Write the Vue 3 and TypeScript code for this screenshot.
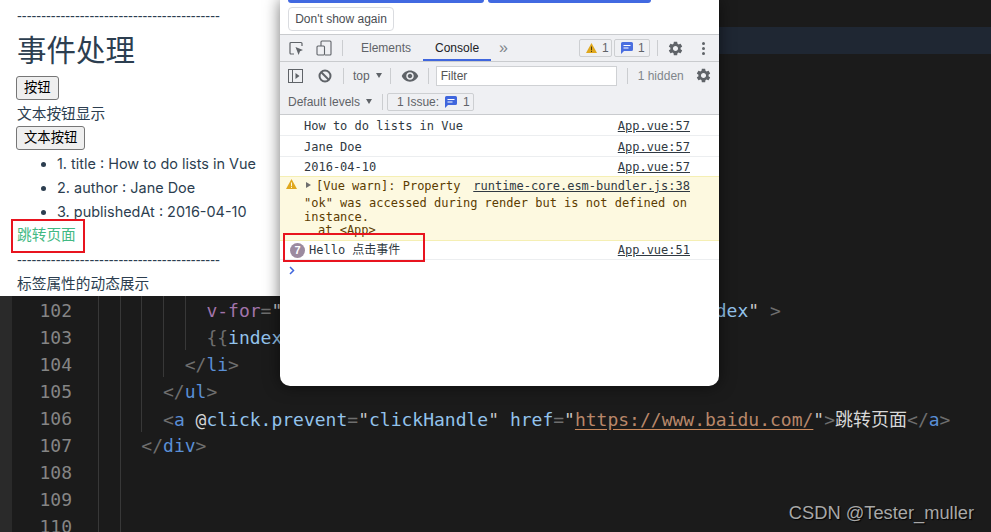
<script setup lang="ts">
type Tok = { t: string; c: string }
type Line = { n: number; indent: number; toks: Tok[]; active?: boolean }

const gear = 'M19.14 12.94c.04-.3.06-.61.06-.94 0-.32-.02-.64-.07-.94l2.03-1.58c.18-.14.23-.41.12-.61l-1.92-3.32c-.12-.22-.37-.29-.59-.22l-2.39.96c-.5-.38-1.03-.7-1.62-.94l-.36-2.54c-.04-.24-.24-.41-.48-.41h-3.84c-.24 0-.43.17-.47.41l-.36 2.54c-.59.24-1.13.57-1.62.94l-2.39-.96c-.22-.08-.47 0-.59.22L2.74 8.87c-.12.21-.08.47.12.61l2.03 1.58c-.05.3-.09.63-.09.94s.02.64.07.94l-2.03 1.58c-.18.14-.23.41-.12.61l1.92 3.32c.12.22.37.29.59.22l2.39-.96c.5.38 1.03.7 1.62.94l.36 2.54c.05.24.24.41.48.41h3.84c.24 0 .44-.17.47-.41l.36-2.54c.59-.24 1.13-.56 1.62-.94l2.39.96c.22.08.47 0 .59-.22l1.92-3.32c.12-.22.07-.47-.12-.61l-2.01-1.58zM12 15.6c-1.98 0-3.6-1.62-3.6-3.6s1.62-3.6 3.6-3.6 3.6 1.62 3.6 3.6-1.62 3.6-3.6 3.6z'

const filled: Record<number, { indent: number; toks: Tok[] }> = {
  102: {
    indent: 5,
    toks: [
      { t: 'v-for', c: 'k' },
      { t: '=', c: 'p' },
      { t: '"', c: 'q' },
      { t: '(value, key, index) in objects', c: 'a' },
      { t: '"', c: 'q' },
      { t: ' ', c: 'p' },
      { t: ':key', c: 'a' },
      { t: '=', c: 'p' },
      { t: '"', c: 'q' },
      { t: 'index', c: 'a' },
      { t: '"', c: 'q' },
      { t: ' >', c: 'p' }
    ]
  },
  103: {
    indent: 5,
    toks: [
      { t: '{{', c: 'p' },
      { t: 'index', c: 'a' },
      { t: ' + 1}}. {{key}} : {{value}}', c: 'a' }
    ]
  },
  104: { indent: 4, toks: [{ t: '</', c: 'p' }, { t: 'li', c: 'tag' }, { t: '>', c: 'p' }] },
  105: { indent: 3, toks: [{ t: '</', c: 'p' }, { t: 'ul', c: 'tag' }, { t: '>', c: 'p' }] },
  106: {
    indent: 3,
    toks: [
      { t: '<', c: 'p' },
      { t: 'a', c: 'tag' },
      { t: ' ', c: 'p' },
      { t: '@', c: 'w' },
      { t: 'click.prevent', c: 'a' },
      { t: '=', c: 'p' },
      { t: '"', c: 'q' },
      { t: 'clickHandle', c: 'a' },
      { t: '"', c: 'q' },
      { t: ' ', c: 'p' },
      { t: 'href', c: 'a' },
      { t: '=', c: 'p' },
      { t: '"', c: 'q' },
      { t: 'https://www.baidu.com/', c: 'url' },
      { t: '"', c: 'q' },
      { t: '>', c: 'p' },
      { t: '跳转页面', c: 'cjk' },
      { t: '</', c: 'p' },
      { t: 'a', c: 'tag' },
      { t: '>', c: 'p' }
    ]
  },
  107: { indent: 2, toks: [{ t: '</', c: 'p' }, { t: 'div', c: 'tag' }, { t: '>', c: 'p' }] }
}

const lines: Line[] = Array.from({ length: 19 }, (_, i) => {
  const n = 92 + i
  const f = filled[n]
  return { n, indent: f ? f.indent : 0, toks: f ? f.toks : [], active: n === 92 }
})

const guides = [
  { left: 98, height: 532 },
  { left: 120, height: 532 },
  { left: 141, height: 432 },
  { left: 163, height: 377 },
  { left: 185, height: 350 }
]

const listItems = ['1. title : How to do lists in Vue', '2. author : Jane Doe', '3. publishedAt : 2016-04-10']
const logs = ['How to do lists in Vue', 'Jane Doe', '2016-04-10']
const rule = '-'.repeat(42)
</script>

<template>
  <div class="desktop">
    <div class="editor">
      <div v-for="l in lines" :key="l.n" class="row" :class="{ active: l.active }">
        <span class="num">{{ l.n >= 102 ? l.n : '' }}</span>
        <span class="code" :style="{ paddingLeft: l.indent * 21.68 + 'px' }"><span v-for="(tk, i) in l.toks" :key="i" :class="tk.c">{{ tk.t }}</span></span>
      </div>
      <i v-for="g in guides" :key="g.left" class="guide" :style="{ left: g.left + 'px', height: g.height + 'px' }"></i>
    </div>

    <section class="page">
      <div class="line rule">{{ rule }}</div>
      <h1>事件处理</h1>
      <button class="btn" type="button">按钮</button>
      <div class="line">文本按钮显示</div>
      <button class="btn" type="button">文本按钮</button>
      <ul>
        <li v-for="it in listItems" :key="it">{{ it }}</li>
      </ul>
      <a class="jump" href="#">跳转页面</a>
      <div class="line rule">{{ rule }}</div>
      <div class="line">标签属性的动态展示</div>
      <i class="red red-link"></i>
    </section>

    <section class="devtools">
      <div class="banner">
        <div class="blue b1"></div>
        <div class="blue b2"></div>
      </div>
      <div class="dont"><span>Don't show again</span></div>

      <div class="bar bar-tabs">
        <svg class="ic-inspect" width="15" height="15" viewBox="0 0 15 15" fill="none">
          <path d="M5 13H2a1 1 0 0 1-1-1V2.500a1 1 0 0 1 1-1h10a1 1 0 0 1 1 1V5" stroke="#5f6368" stroke-width="1.200" />
          <path d="M6.500 6l7.500 3-3 1.300L9.600 14z" fill="#5f6368" />
        </svg>
        <svg class="ic-device" width="16" height="16" viewBox="0 0 16 16" fill="none">
          <path d="M5 6V2a1 1 0 0 1 1-1h8a1 1 0 0 1 1 1v12a1 1 0 0 1-1 1H9" stroke="#5f6368" stroke-width="1.100" />
          <rect x="1" y="6" width="7.500" height="9" rx="1" stroke="#5f6368" stroke-width="1.100" />
        </svg>
        <i class="sep s-tabs"></i>
        <span class="tab">Elements</span>
        <span class="tab on">Console</span>
        <span class="more">»</span>
        <span class="badge warn-badge">
          <svg width="11" height="10" viewBox="0 0 11 10"><path d="M5.500 0L11 10H0z" fill="#e0a81e" /><path d="M5 3.500h1v3.500H5zM5 7.800h1V9H5z" fill="#4a3a10" /></svg>
          <span>1</span>
        </span>
        <span class="badge msg-badge">
          <svg width="12" height="12" viewBox="0 0 12 12"><path d="M1.500 0h9A1.500 1.500 0 0 1 12 1.500v6A1.500 1.500 0 0 1 10.500 9H3l-3 3V1.500A1.500 1.500 0 0 1 1.500 0z" fill="#4a6ee0" /><path d="M2.500 3h7v1h-7zM2.500 5.500h5v1h-5z" fill="#fff" /></svg>
          <span>1</span>
        </span>
        <i class="sep s-right"></i>
        <svg class="ic-gear" width="17" height="17" viewBox="0 0 24 24"><path :d="gear" fill="#5f6368" /></svg>
        <span class="dots"><i></i><i></i><i></i></span>
      </div>

      <div class="bar bar-filter">
        <svg class="ic-panel" width="15" height="14" viewBox="0 0 15 14" fill="none">
          <rect x=".5" y=".5" width="14" height="13" stroke="#5f6368" />
          <path d="M4.500 0v14" stroke="#5f6368" />
          <path d="M7.500 4l4 3-4 3z" fill="#5f6368" />
        </svg>
        <svg class="ic-stop" width="14" height="14" viewBox="0 0 14 14" fill="none">
          <circle cx="7" cy="7" r="5.500" stroke="#5f6368" stroke-width="2" />
          <path d="M3 3l8 8" stroke="#5f6368" stroke-width="2" />
        </svg>
        <i class="sep s-stop"></i>
        <span class="top">top</span>
        <i class="caret c-top"></i>
        <i class="sep s-top"></i>
        <svg class="ic-eye" width="18" height="18" viewBox="0 0 24 24"><path d="M12 4.500C7 4.500 2.730 7.610 1 12c1.730 4.390 6 7.500 11 7.500s9.270-3.110 11-7.500c-1.730-4.390-6-7.500-11-7.500zM12 17c-2.760 0-5-2.240-5-5s2.240-5 5-5 5 2.240 5 5-2.240 5-5 5zm0-8c-1.660 0-3 1.340-3 3s1.340 3 3 3 3-1.340 3-3-1.340-3-3-3z" fill="#5f6368" /></svg>
        <i class="sep s-eye"></i>
        <span class="filter">Filter</span>
        <i class="sep s-filter"></i>
        <span class="hidden-count">1 hidden</span>
        <svg class="ic-gear2" width="17" height="17" viewBox="0 0 24 24"><path :d="gear" fill="#5f6368" /></svg>
      </div>

      <div class="bar bar-levels">
        <span class="levels">Default levels</span>
        <i class="caret c-levels"></i>
        <i class="sep s-levels"></i>
        <span class="issue">
          <span>1 Issue:</span>
          <svg width="12" height="12" viewBox="0 0 12 12"><path d="M1.500 0h9A1.500 1.500 0 0 1 12 1.500v6A1.500 1.500 0 0 1 10.500 9H3l-3 3V1.500A1.500 1.500 0 0 1 1.500 0z" fill="#3f66dd" /><path d="M2.500 3h7v1h-7zM2.500 5.500h5v1h-5z" fill="#fff" /></svg>
          <span>1</span>
        </span>
      </div>

      <div class="console">
        <div v-for="m in logs" :key="m" class="log plain">
          <span>{{ m }}</span><a>App.vue:57</a>
        </div>
        <div class="log warn">
          <div class="warn-first">
            <svg class="w-tri" width="11" height="10" viewBox="0 0 11 10"><path d="M5.500 0L11 10H0z" fill="#e0a81e" /><path d="M5 3.500h1v3.500H5zM5 7.800h1V9H5z" fill="#fdf9e0" /></svg>
            <i class="tri"></i>
            <span>[Vue warn]: Property</span>
            <a>runtime-core.esm-bundler.js:38</a>
          </div>
          <div>"ok" was accessed during render but is not defined on</div>
          <div>instance.</div>
          <div class="at">at &lt;App&gt;</div>
        </div>
        <div class="log hello">
          <span class="count">7</span>
          <span class="hello-text">Hello 点击事件</span>
          <a>App.vue:51</a>
        </div>
        <svg class="prompt" width="6" height="9" viewBox="0 0 6 9" fill="none"><path d="M1 1l3.500 3.500L1 8" stroke="#3f66dd" stroke-width="1.500" /></svg>
      </div>
    </section>

    <i class="red red-log"></i>
    <div class="mark">CSDN @Tester_muller</div>
  </div>
</template>

<style>
html, body { margin: 0; background: #1b1b1b; }
</style>

<style scoped>
.desktop { position: relative; width: 991px; height: 532px; overflow: hidden; background: #1b1b1b; }

/* editor */
.editor { position: relative; height: 532px; padding-top: 27px; box-sizing: border-box; overflow: hidden;
  border-left: 12px solid #2a2a2a; font: 18px/27px "DejaVu Sans Mono", "Noto Sans CJK SC", monospace; }
.row { display: flex; height: 27px; white-space: pre; margin-left: -12px; padding-left: 12px; }
.row.active { background: #1f2733; }
.num { width: 60px; text-align: right; color: #858585; flex: none; }
.code { margin-left: 26px; }
.k { color: #a274aa; }
.p { color: #6e6e6e; }
.q { color: #c8c8c8; }
.a { color: #93c3ec; }
.tag { color: #5a8fd6; }
.w { color: #d4d4d4; }
.url { color: #b8876a; text-decoration: underline; text-decoration-color: #cc8a5c; text-underline-offset: 3px; }
.cjk { color: #d8d8d8; font-family: "Noto Sans CJK SC", sans-serif; font-size: 18px; }
.guide { position: absolute; top: 0; width: 1px; background: #383838; margin-left: -12px; }

/* page window */
.page { position: absolute; left: 0; top: 0; width: 280px; height: 296px; background: #fff; overflow: hidden;
  padding: 4px 0 0 17px; box-sizing: border-box; color: #2c3e50;
  font: 14.7px/24px Inter, "Noto Sans CJK SC", sans-serif; }
.line { height: 24px; white-space: nowrap; }
.rule { font-family: "Liberation Sans", sans-serif; font-size: 14.5px; line-height: 25px; }
h1 { margin: 0 0 4px; height: 44px; font: 400 29.5px/46px "Liberation Sans", "Noto Sans CJK SC", sans-serif; }
.btn { display: block; height: 24px; margin: 0 0 0 -1px; padding: 0 7px; background: #efefef; color: #000;
  border: 1px solid #767676; border-radius: 3px; font: 13.33px/22px "Liberation Sans", "Noto Sans CJK SC", sans-serif; }
.btn + .line { margin-top: 2px; }
ul { margin: 2px 0 0; padding-left: 40px; }
li { height: 24px; white-space: nowrap; font-size: 14.45px; }
.jump { display: block; height: 24px; margin-top: -1px; color: #42b983; text-decoration: none; }
.jump + .line { margin-top: 1px; }

.red { position: absolute; border: 2px solid #e8141f; box-sizing: border-box; display: block; }
.red-link { left: 11px; top: 219px; width: 74px; height: 34px; }
.red-log { left: 283px; top: 233px; width: 142px; height: 29px; }

/* devtools */
.devtools { position: absolute; left: 280px; top: 0; width: 439px; height: 386px; background: #fff;
  border-radius: 0 0 10px 10px; overflow: hidden; box-shadow: 0 0 16px rgba(0, 0, 0, .55);
  font: 12px/16px "Liberation Sans", Arial, sans-serif; color: #5f6368; }
.banner { display: flex; gap: 4px; padding-left: 8px; height: 3px; }
.blue { height: 3px; background: #4169e1; border-radius: 0 0 4px 4px; }
.b1 { width: 196px; }
.b2 { width: 163px; }
.dont { height: 31px; padding: 4px 0 0 8px; box-sizing: border-box; }
.dont span { display: block; width: 106px; height: 24px; box-sizing: border-box; border: 1px solid #dadce0; border-radius: 4px;
  text-align: center; line-height: 22px; font-size: 12px; color: #4a4d52; margin-top: 0; }

.bar { display: flex; align-items: center; background: #eff0f3; box-sizing: border-box; }
.bar-tabs { height: 28px; border-top: 1px solid #c9cbce; border-bottom: 1px solid #c9cbce; padding-left: 9px; }
.bar-filter { height: 27px; padding-left: 8px; }
.bar-levels { height: 26px; padding-left: 8px; border-bottom: 1px solid #c9cbce; }
.sep { display: block; width: 1px; height: 16px; background: #cbcdd0; flex: none; }
.ic-device { margin-left: 12px; }
.s-tabs { margin-left: 10px; margin-right: 6px; }
.tab { height: 26px; line-height: 26px; padding: 0 12px; }
.tab.on { color: #202124; box-shadow: inset 0 -2px 0 #3f66dd; }
.more { margin-left: 8px; font-size: 16px; color: #80868b; width: 80px; }
.badge { display: flex; align-items: center; height: 18px; box-sizing: border-box; border: 1px solid #cdcfd2; border-radius: 2px; gap: 5px; padding-left: 6px; font-size: 12px; }
.warn-badge { width: 33px; }
.msg-badge { width: 36px; margin-left: 2px; }
.s-right { margin-left: 7px; }
.ic-gear { margin-left: 9px; }
.dots { display: flex; flex-direction: column; gap: 2px; margin-left: 18px; }
.dots i { display: block; width: 3px; height: 3px; border-radius: 50%; background: #5f6368; }

.ic-stop { margin-left: 15px; }
.s-stop { margin-left: 11px; }
.top { margin-left: 9px; }
.caret { display: block; width: 0; height: 0; border-left: 3.500px solid transparent; border-right: 3.500px solid transparent; border-top: 5px solid #5f6368; flex: none; }
.c-top { margin-left: 6px; }
.s-top { margin-left: 8px; }
.ic-eye { margin-left: 10px; }
.s-eye { margin-left: 9px; }
.filter { display: block; width: 181px; height: 20px; box-sizing: border-box; margin-left: 7px; border: 1px solid #cfd1d4; background: #fff;
  line-height: 18px; padding-left: 4px; color: #555; }
.s-filter { margin-left: 10px; }
.hidden-count { margin-left: 10px; color: #80868b; width: 57px; }
.levels { color: #5f6368; }
.c-levels { margin-left: 6px; }
.s-levels { margin-left: 10px; }
.issue { display: flex; align-items: center; gap: 6px; width: 87px; height: 18px; box-sizing: border-box; margin-left: 4px; padding-left: 9px;
  border: 1px solid #cdcfd2; border-radius: 2px; }

.console { font: 12px/14px "DejaVu Sans Mono", "Noto Sans CJK SC", monospace; color: #303942; }
.log { display: flex; justify-content: space-between; align-items: center; height: 21px; padding: 0 29px 0 24px; box-sizing: border-box; border-bottom: 1px solid #eceef0; white-space: pre; }
.log.plain { padding-top: 1px; }
.log.plain:first-child { padding-top: 2px; }
.log:nth-child(3) { height: 19px; padding-top: 0; border-bottom: 0; }
.log a, .warn-first a { text-decoration: underline; color: #303942; }
.warn { display: block; height: 65px; padding: 2px 29px 0 24px; background: #fdf9e0; color: #5c3c00; border-top: 1px solid #f5efb4; border-bottom: 1px solid #f5efb4; }
.warn div { height: 14px; }
.warn-first { position: relative; display: flex; align-items: center; margin-left: 12px; height: 14px !important; margin-bottom: 3px; }
.warn-first a { margin-left: auto; }
.w-tri { position: absolute; left: -30px; top: 0; }
.tri { position: absolute; left: -10px; top: 3px; border-left: 5px solid #6e6e6e; border-top: 3.500px solid transparent; border-bottom: 3.500px solid transparent; }
.warn .at { padding-left: 14px; margin-top: -1px; }
.hello { height: 19px; padding-left: 10px; }
.count { width: 15px; height: 15px; border-radius: 50%; background: #9b8a9f; color: #fff; font: 700 11px/15px "Liberation Sans", sans-serif; text-align: center; flex: none; }
.hello-text { margin-left: 4px; margin-right: auto; font-size: 12px; }
.prompt { display: block; margin: 6px 0 0 9px; }

.mark { position: absolute; right: 17px; top: 502px; color: #a8a8a8; font: 18.3px/22px "Liberation Sans", sans-serif; text-shadow: 1px 1px 1px #000; }
</style>
